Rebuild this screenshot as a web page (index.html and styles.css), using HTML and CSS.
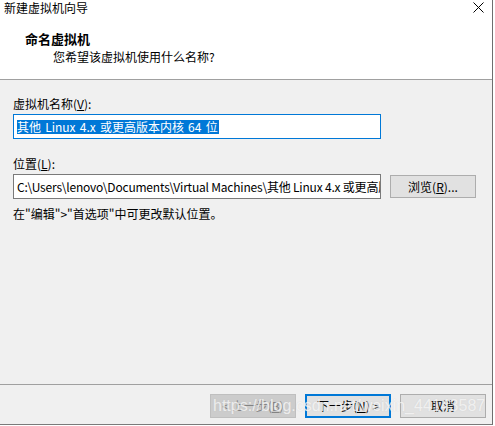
FILE: index.html
```html
<!DOCTYPE html>
<html lang="zh-CN">
<head>
<meta charset="utf-8">
<title>新建虚拟机向导</title>
<link rel="stylesheet" href="styles.css">
</head>
<body>
<div class="window">
  <div class="header">
    <div class="titlebar">
      <span class="title">新建虚拟机向导</span>
      <svg class="close" width="11" height="11" viewBox="0 0 11 11"><path d="M0.5 0.5 L10.5 10.5 M10.5 0.5 L0.5 10.5" stroke="#000" stroke-width="1" fill="none"/></svg>
    </div>
    <div class="heading">命名虚拟机</div>
    <div class="subtitle">您希望该虚拟机使用什么名称?</div>
  </div>
  <div class="body">
    <div class="label">虚拟机名称(<u>V</u>):</div>
    <div class="input focused"><span class="sel">其他 Linux 4.x 或更高版本内核 64 位</span></div>
    <div class="label second">位置(<u>L</u>):</div>
    <div class="row">
      <div class="input path">C:\Users\lenovo\Documents\Virtual Machines\其他 Linux 4.x 或更高版本内核 64 位</div>
      <div class="btn browse">浏览(<u>R</u>)...</div>
    </div>
    <div class="hint">在"编辑"&gt;"首选项"中可更改默认位置。</div>
  </div>
  <div class="footer">
    <div class="btn disabled">&lt; 上一步(<u>B</u>)</div>
    <div class="btn default">下一步(<u>N</u>) &gt;</div>
    <div class="btn">取消</div>
    <div class="watermark">https://blog.csdn.net/weixin_44143587</div>
  </div>
</div>
</body>
</html>
```

FILE: styles.css
```css
html, body {
  margin: 0;
  padding: 0;
  background: #ffffff;
}
body {
  font-family: "Noto Sans CJK SC", "Noto Sans", sans-serif;
  font-size: 12px;
  color: #000;
}
.window {
  width: 492px;
  height: 424px;
  border-right: 1px solid #6e6e6e;
  border-bottom: 1px solid #7a7a7a;
  display: flex;
  flex-direction: column;
  background: #f0f0f0;
}
.header {
  background: #ffffff;
  height: 79px;
  border-bottom: 1px solid #a0a0a0;
  flex: none;
}
.titlebar {
  display: flex;
  justify-content: space-between;
  align-items: flex-start;
  height: 16px;
  line-height: 16px;
  padding: 0 8px 0 4px;
}
.title {
  color: #000;
}
.close {
  margin-top: 2px;
}
.heading {
  margin-top: 15px;
  padding-left: 25px;
  font-weight: bold;
  font-size: 13px;
  line-height: 16px;
}
.subtitle {
  margin-top: 2px;
  padding-left: 53px;
  line-height: 16px;
}
.body {
  flex: 1;
  padding: 16px 0 0 13px;
}
.label {
  line-height: 16px;
}
.label.second {
  margin-top: 17px;
}
.input {
  box-sizing: border-box;
  width: 368px;
  height: 25px;
  margin-top: 2px;
  background: #ffffff;
  border: 1px solid #7a7a7a;
  padding-left: 3px;
  line-height: 23px;
  white-space: nowrap;
  overflow: hidden;
}
.input.focused {
  border-color: #0078d7;
  display: flex;
  align-items: center;
}
.input.path {
  letter-spacing: -0.2px;
}
.sel {
  display: inline-block;
  background: #0078d7;
  color: #ffffff;
  line-height: 14px;
  padding-right: 1px;
  word-spacing: 1.5px;
}
.row {
  display: flex;
  align-items: center;
  gap: 9px;
  margin-top: 2px;
}
.row .input {
  margin-top: 0;
  flex: none;
}
.hint {
  margin-top: 7px;
  line-height: 16px;
}
.btn {
  box-sizing: border-box;
  width: 86px;
  height: 23px;
  background: #e1e1e1;
  border: 1px solid #adadad;
  display: flex;
  align-items: center;
  justify-content: center;
  line-height: 16px;
  flex: none;
}
.footer {
  flex: none;
  height: 40px;
  box-sizing: border-box;
  border-top: 1px solid #a0a0a0;
  padding: 9px 6px 0 0;
  display: flex;
  justify-content: flex-end;
  align-items: flex-start;
  gap: 9px;
  position: relative;
}
.footer .btn {
  height: 24px;
}
.btn.disabled {
  background: #cccccc;
  border-color: #bfbfbf;
  color: #838383;
}
.btn.default {
  border: 2px solid #0078d7;
}
.watermark {
  position: absolute;
  left: 213px;
  top: 11px;
  font-family: "Liberation Sans", Arial, sans-serif;
  font-size: 16px;
  line-height: 20px;
  color: rgba(255, 255, 255, 0.7);
  text-shadow: 0 0 1px rgba(190, 190, 190, 0.5);
  white-space: nowrap;
  pointer-events: none;
}
```
